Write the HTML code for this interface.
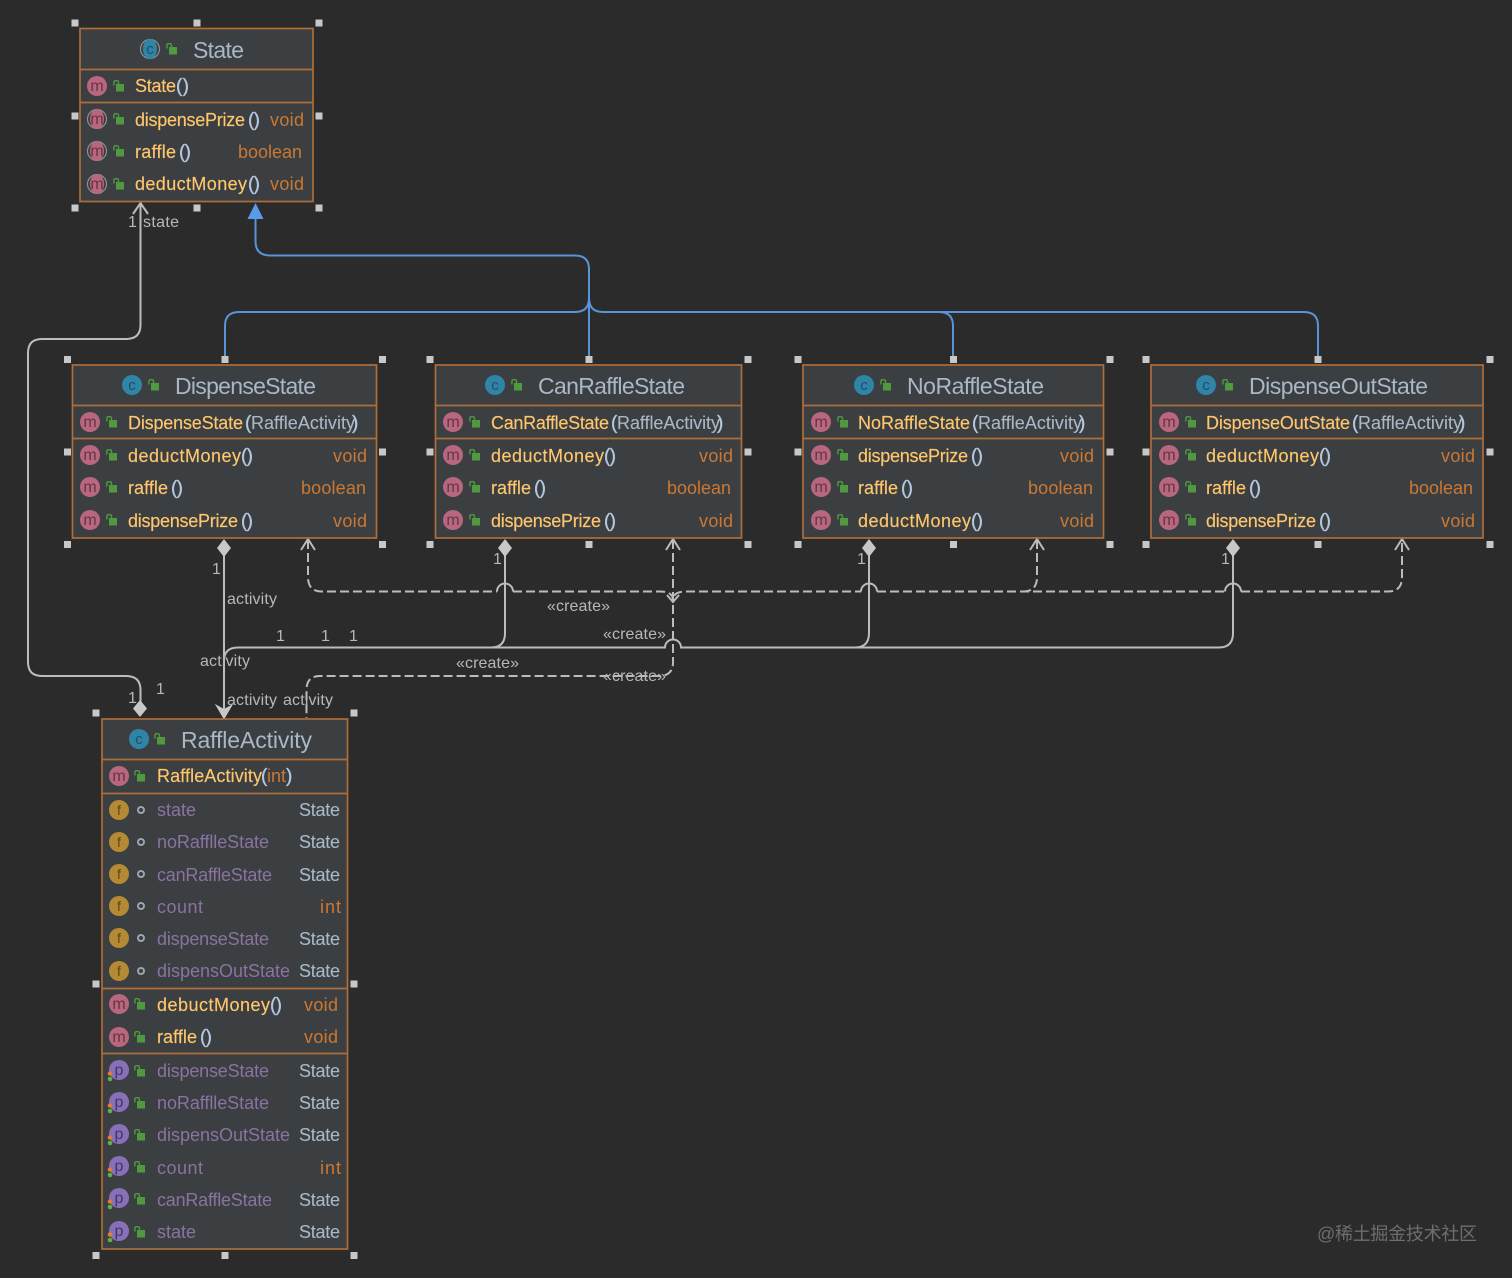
<!DOCTYPE html>
<html><head><meta charset="utf-8"><style>
html,body{margin:0;padding:0;background:#2b2b2b;width:1512px;height:1278px;overflow:hidden}
svg{display:block;font-family:"Liberation Sans","Noto Sans CJK SC",sans-serif;filter:blur(.3px)}
.b{fill:#3c3f41;stroke:#ad6e3b;stroke-width:1.7}
.d{stroke:#ad6e3b;stroke-width:1.7;fill:none}
.t{font-size:23px;fill:#a9b7c6}
.n{font-size:18px;fill:#ffc66d;stroke:#ffc66d;stroke-width:.15}
.p{font-size:18px;fill:#a9b7c6;stroke:#a9b7c6;stroke-width:.1}
.o{font-size:19px;fill:#b4c8e0;stroke:#b4c8e0;stroke-width:.35}
.y{font-size:18px;fill:#cc7832}
.f{font-size:18px;fill:#8b72a0}
.l{font-size:16px;fill:#b4b8bc}
.ci{font-size:16px;fill:#643644;text-anchor:middle}
.cc{font-size:15px;fill:#1f4f66;text-anchor:middle}
.cf{font-size:14px;fill:#5c4420;text-anchor:middle}
.cp{font-size:16px;fill:#3f3560;text-anchor:middle}
.mi{fill:#b9667f}.ci2{fill:#2f84a8}.fi{fill:#b58a35}.pi{fill:#8670b8}
.h{fill:#c8c8c8}
.bl{fill:none;stroke:#5a94d8;stroke-width:2}
.g{fill:none;stroke:#bcbcbc;stroke-width:2}
.ds{fill:none;stroke:#bcbcbc;stroke-width:2;stroke-dasharray:9 4}
.od{fill:#e07b3a}.gd{fill:#5fb04a}
</style></head><body>
<svg width="1512" height="1278" viewBox="0 0 1512 1278" xmlns="http://www.w3.org/2000/svg">
<defs>
<g id="k"><rect x="3" y="4" width="8" height="7.500" fill="#4f9a3f"/><path d="M.9 5.500V2.200A1.600 1.600 0 0 1 2.500 .7H4A1.600 1.600 0 0 1 5.500 2.200V4" fill="none" stroke="#4f9a3f" stroke-width="1.400"/></g>
<g id="q"><circle cx="0" cy="0" r="3" fill="none" stroke="#a0a4a8" stroke-width="2"/></g>
</defs>
<rect width="1512" height="1278" fill="#2b2b2b"/>

<!-- connectors -->
<path class="bl" d="M255.500 218V241Q255.500 255.500 270 255.500H575Q589 255.500 589 269V358"/>
<path class="bl" d="M225 358V326Q225 312 239 312H575Q589 312 589 298Q589 312 603 312H939Q953 312 953 326V358"/>
<path class="bl" d="M939 312H1304Q1318 312 1318 326V358"/>
<path d="M255.500 203L263.500 219H247.500Z" fill="#5a9be8"/>

<path class="g" d="M140.500 203V325Q140.500 339 126 339H42Q28 339 28 353V662Q28 676 42 676H126Q140.500 676 140.500 690V703"/>
<path class="g" d="M133 214L140.500 203L148 214"/>
<path class="g" d="M224 555V714"/>
<path class="g" d="M224 661Q224 647.500 238 647.500H665A8 8 0 0 1 681 647.500H1219Q1233 647.500 1233 633V555"/>
<path class="g" d="M491 647.500Q505 647.500 505 633V555M855 647.500Q869 647.500 869 633V555"/>
<path d="M224 539L231 548L224 557L217 548Z" class="h"/>
<path d="M505 539L512 548L505 557L498 548Z" class="h"/>
<path d="M869 539L876 548L869 557L862 548Z" class="h"/>
<path d="M1233 539L1240 548L1233 557L1226 548Z" class="h"/>
<path d="M140 700L147 708.500L140 717L133 708.500Z" class="h"/>
<path d="M224 718L217 706L224 710L231 706Z" fill="#c8c8c8" stroke="#c8c8c8" stroke-width="1.600"/>

<path class="ds" d="M308 540V577Q308 591.500 322 591.500H497M513 591.500H660Q673 591.500 673 600Q673 591.500 686 591.500H861M877 591.500H1225M1241 591.500H1388Q1402 591.500 1402 577V540"/>
<path class="g" d="M497 591.500A8 8 0 0 1 513 591.500M861 591.500A8 8 0 0 1 877 591.500M1225 591.500A8 8 0 0 1 1241 591.500"/>
<path class="ds" d="M1037 540V577Q1037 591.500 1023 591.500"/>
<path class="ds" d="M673 540V662Q673 676 659 676H320Q306.500 676 306.500 690V718"/>
<path class="g" d="M301 550L308 539L315 550M666 550L673 539L680 550M1030 550L1037 539L1044 550M1395 550L1402 539L1409 550M667 595L673 602L679 595"/>

<!-- labels -->
<text class="l" x="128" y="227">1</text><text class="l" x="143" y="227" textLength="36">state</text>
<text class="l" x="212" y="574">1</text><text class="l" x="227" y="604" textLength="50">activity</text>
<text class="l" x="276" y="641">1</text><text class="l" x="321" y="641">1</text><text class="l" x="349" y="641">1</text>
<text class="l" x="200" y="666" textLength="50">activity</text>
<text class="l" x="128" y="703">1</text><text class="l" x="156" y="694">1</text>
<text class="l" x="227" y="705" textLength="50">activity</text><text class="l" x="283" y="705" textLength="50">activity</text>
<text class="l" x="493" y="564">1</text><text class="l" x="857" y="564">1</text><text class="l" x="1221" y="564">1</text>
<text class="l" x="547" y="611" textLength="63">«create»</text>
<text class="l" x="603" y="639" textLength="63">«create»</text>
<text class="l" x="456" y="668" textLength="63">«create»</text>
<text class="l" x="603" y="681" textLength="63">«create»</text>

<!-- State -->
<rect class="b" x="80" y="28.500" width="233" height="173"/>
<path class="d" d="M80 69.500H313M80 102.500H313"/>
<circle cx="150" cy="49" r="9.500" fill="none" stroke="#8a9094" stroke-width="1.200"/><ellipse class="ci2" cx="150" cy="49" rx="7" ry="10"/>
<text class="cc" x="150" y="54">c</text><use href="#k" x="166" y="43"/>
<text class="t" x="193" y="58" textLength="51">State</text>
<circle class="mi" cx="97" cy="86" r="10"/><text class="ci" x="97" y="91">m</text><use href="#k" x="113" y="80"/>
<text class="n" x="135" y="92" textLength="41">State</text><text class="o" x="176" y="92" textLength="13">()</text>
<circle cx="97" cy="119" r="9.500" fill="none" stroke="#8a9094" stroke-width="1.200"/><ellipse class="mi" cx="97" cy="119" rx="7" ry="10"/><text class="ci" x="97" y="124">m</text><use href="#k" x="113" y="113"/>
<text class="n" x="135" y="126" textLength="110">dispensePrize</text><text class="o" x="248" y="126" textLength="12">()</text><text class="y" x="270" y="126" textLength="34">void</text>
<circle cx="97" cy="151" r="9.500" fill="none" stroke="#8a9094" stroke-width="1.200"/><ellipse class="mi" cx="97" cy="151" rx="7" ry="10"/><text class="ci" x="97" y="156">m</text><use href="#k" x="113" y="145"/>
<text class="n" x="135" y="158" textLength="41">raffle</text><text class="o" x="179" y="158" textLength="12">()</text><text class="y" x="238" y="158" textLength="64">boolean</text>
<circle cx="97" cy="184" r="9.500" fill="none" stroke="#8a9094" stroke-width="1.200"/><ellipse class="mi" cx="97" cy="184" rx="7" ry="10"/><text class="ci" x="97" y="189">m</text><use href="#k" x="113" y="178"/>
<text class="n" x="135" y="190" textLength="112">deductMoney</text><text class="o" x="248" y="190" textLength="12">()</text><text class="y" x="270" y="190" textLength="34">void</text>

<!-- DispenseState -->
<rect class="b" x="72.500" y="365" width="304" height="173"/>
<path class="d" d="M72.500 405.500H376.500M72.500 438.500H376.500"/>
<circle class="ci2" cx="132" cy="385" r="10"/><text class="cc" x="132" y="390">c</text><use href="#k" x="148" y="379"/>
<text class="t" x="175" y="394" textLength="141">DispenseState</text>
<circle class="mi" cx="90" cy="422" r="10"/><text class="ci" x="90" y="427">m</text><use href="#k" x="106" y="416"/>
<text class="n" x="128" y="429" textLength="115">DispenseState</text><text class="o" x="245" y="429">(</text><text class="p" x="251" y="429" textLength="104">RaffleActivity</text><text class="o" x="352" y="429">)</text>
<circle class="mi" cx="90" cy="455" r="10"/><text class="ci" x="90" y="460">m</text><use href="#k" x="106" y="449"/>
<text class="n" x="128" y="462" textLength="113">deductMoney</text><text class="o" x="241" y="462" textLength="12">()</text><text class="y" x="333" y="462" textLength="34">void</text>
<circle class="mi" cx="90" cy="487" r="10"/><text class="ci" x="90" y="492">m</text><use href="#k" x="106" y="481"/>
<text class="n" x="128" y="494" textLength="40">raffle</text><text class="o" x="171" y="494" textLength="12">()</text><text class="y" x="301" y="494" textLength="65">boolean</text>
<circle class="mi" cx="90" cy="520" r="10"/><text class="ci" x="90" y="525">m</text><use href="#k" x="106" y="514"/>
<text class="n" x="128" y="527" textLength="110">dispensePrize</text><text class="o" x="241" y="527" textLength="12">()</text><text class="y" x="333" y="527" textLength="34">void</text>

<!-- CanRaffleState -->
<rect class="b" x="435.500" y="365" width="306" height="173"/>
<path class="d" d="M435.500 405.500H741.500M435.500 438.500H741.500"/>
<circle class="ci2" cx="495" cy="385" r="10"/><text class="cc" x="495" y="390">c</text><use href="#k" x="511" y="379"/>
<text class="t" x="538" y="394" textLength="147">CanRaffleState</text>
<circle class="mi" cx="453" cy="422" r="10"/><text class="ci" x="453" y="427">m</text><use href="#k" x="469" y="416"/>
<text class="n" x="491" y="429" textLength="118">CanRaffleState</text><text class="o" x="611" y="429">(</text><text class="p" x="617" y="429" textLength="103">RaffleActivity</text><text class="o" x="717" y="429">)</text>
<circle class="mi" cx="453" cy="455" r="10"/><text class="ci" x="453" y="460">m</text><use href="#k" x="469" y="449"/>
<text class="n" x="491" y="462" textLength="113">deductMoney</text><text class="o" x="604" y="462" textLength="12">()</text><text class="y" x="699" y="462" textLength="34">void</text>
<circle class="mi" cx="453" cy="487" r="10"/><text class="ci" x="453" y="492">m</text><use href="#k" x="469" y="481"/>
<text class="n" x="491" y="494" textLength="40">raffle</text><text class="o" x="534" y="494" textLength="12">()</text><text class="y" x="667" y="494" textLength="64">boolean</text>
<circle class="mi" cx="453" cy="520" r="10"/><text class="ci" x="453" y="525">m</text><use href="#k" x="469" y="514"/>
<text class="n" x="491" y="527" textLength="110">dispensePrize</text><text class="o" x="604" y="527" textLength="12">()</text><text class="y" x="699" y="527" textLength="34">void</text>

<!-- NoRaffleState -->
<rect class="b" x="803" y="365" width="300.500" height="173"/>
<path class="d" d="M803 405.500H1103.500M803 438.500H1103.500"/>
<circle class="ci2" cx="864" cy="385" r="10"/><text class="cc" x="864" y="390">c</text><use href="#k" x="880" y="379"/>
<text class="t" x="907" y="394" textLength="137">NoRaffleState</text>
<circle class="mi" cx="821" cy="422" r="10"/><text class="ci" x="821" y="427">m</text><use href="#k" x="837" y="416"/>
<text class="n" x="858" y="429" textLength="112">NoRaffleState</text><text class="o" x="972" y="429">(</text><text class="p" x="978" y="429" textLength="104">RaffleActivity</text><text class="o" x="1079" y="429">)</text>
<circle class="mi" cx="821" cy="455" r="10"/><text class="ci" x="821" y="460">m</text><use href="#k" x="837" y="449"/>
<text class="n" x="858" y="462" textLength="110">dispensePrize</text><text class="o" x="971" y="462" textLength="12">()</text><text class="y" x="1060" y="462" textLength="34">void</text>
<circle class="mi" cx="821" cy="487" r="10"/><text class="ci" x="821" y="492">m</text><use href="#k" x="837" y="481"/>
<text class="n" x="858" y="494" textLength="40">raffle</text><text class="o" x="901" y="494" textLength="12">()</text><text class="y" x="1028" y="494" textLength="65">boolean</text>
<circle class="mi" cx="821" cy="520" r="10"/><text class="ci" x="821" y="525">m</text><use href="#k" x="837" y="514"/>
<text class="n" x="858" y="527" textLength="113">deductMoney</text><text class="o" x="971" y="527" textLength="12">()</text><text class="y" x="1060" y="527" textLength="34">void</text>

<!-- DispenseOutState -->
<rect class="b" x="1151" y="365" width="332" height="173"/>
<path class="d" d="M1151 405.500H1483M1151 438.500H1483"/>
<circle class="ci2" cx="1206" cy="385" r="10"/><text class="cc" x="1206" y="390">c</text><use href="#k" x="1222" y="379"/>
<text class="t" x="1249" y="394" textLength="179">DispenseOutState</text>
<circle class="mi" cx="1169" cy="422" r="10"/><text class="ci" x="1169" y="427">m</text><use href="#k" x="1185" y="416"/>
<text class="n" x="1206" y="429" textLength="144">DispenseOutState</text><text class="o" x="1352" y="429">(</text><text class="p" x="1358" y="429" textLength="104">RaffleActivity</text><text class="o" x="1459" y="429">)</text>
<circle class="mi" cx="1169" cy="455" r="10"/><text class="ci" x="1169" y="460">m</text><use href="#k" x="1185" y="449"/>
<text class="n" x="1206" y="462" textLength="113">deductMoney</text><text class="o" x="1319" y="462" textLength="12">()</text><text class="y" x="1441" y="462" textLength="34">void</text>
<circle class="mi" cx="1169" cy="487" r="10"/><text class="ci" x="1169" y="492">m</text><use href="#k" x="1185" y="481"/>
<text class="n" x="1206" y="494" textLength="40">raffle</text><text class="o" x="1249" y="494" textLength="12">()</text><text class="y" x="1409" y="494" textLength="64">boolean</text>
<circle class="mi" cx="1169" cy="520" r="10"/><text class="ci" x="1169" y="525">m</text><use href="#k" x="1185" y="514"/>
<text class="n" x="1206" y="527" textLength="110">dispensePrize</text><text class="o" x="1319" y="527" textLength="12">()</text><text class="y" x="1441" y="527" textLength="34">void</text>

<!-- RaffleActivity -->
<rect class="b" x="102" y="719" width="245.500" height="530"/>
<path class="d" d="M102 759.500H347.500M102 793.500H347.500M102 988.500H347.500M102 1053.500H347.500"/>
<circle class="ci2" cx="139" cy="739" r="10"/><text class="cc" x="139" y="744">c</text><use href="#k" x="154" y="733"/>
<text class="t" x="181" y="748" textLength="131">RaffleActivity</text>
<circle class="mi" cx="119" cy="776" r="10"/><text class="ci" x="119" y="781">m</text><use href="#k" x="134" y="770"/>
<text class="n" x="157" y="782" textLength="105">RaffleActivity</text><text class="o" x="261" y="782">(</text><text class="y" x="267" y="782" textLength="19">int</text><text class="o" x="286" y="782">)</text>

<circle class="fi" cx="119" cy="810" r="10"/><text class="cf" x="119" y="815">f</text><use href="#q" x="141" y="810"/><text class="f" x="157" y="816" textLength="39">state</text><text class="p" x="299" y="816" textLength="41">State</text>
<circle class="fi" cx="119" cy="842" r="10"/><text class="cf" x="119" y="847">f</text><use href="#q" x="141" y="842"/><text class="f" x="157" y="848" textLength="112">noRafflleState</text><text class="p" x="299" y="848" textLength="41">State</text>
<circle class="fi" cx="119" cy="874" r="10"/><text class="cf" x="119" y="879">f</text><use href="#q" x="141" y="874"/><text class="f" x="157" y="881" textLength="115">canRaffleState</text><text class="p" x="299" y="881" textLength="41">State</text>
<circle class="fi" cx="119" cy="906" r="10"/><text class="cf" x="119" y="911">f</text><use href="#q" x="141" y="906"/><text class="f" x="157" y="913" textLength="46">count</text><text class="y" x="320" y="913" textLength="21">int</text>
<circle class="fi" cx="119" cy="938" r="10"/><text class="cf" x="119" y="943">f</text><use href="#q" x="141" y="938"/><text class="f" x="157" y="945" textLength="112">dispenseState</text><text class="p" x="299" y="945" textLength="41">State</text>
<circle class="fi" cx="119" cy="971" r="10"/><text class="cf" x="119" y="976">f</text><use href="#q" x="141" y="971"/><text class="f" x="157" y="977" textLength="133">dispensOutState</text><text class="p" x="299" y="977" textLength="41">State</text>

<circle class="mi" cx="119" cy="1004" r="10"/><text class="ci" x="119" y="1009">m</text><use href="#k" x="134" y="998"/>
<text class="n" x="157" y="1011" textLength="113">debuctMoney</text><text class="o" x="270" y="1011" textLength="12">()</text><text class="y" x="304" y="1011" textLength="34">void</text>
<circle class="mi" cx="119" cy="1037" r="10"/><text class="ci" x="119" y="1042">m</text><use href="#k" x="134" y="1031"/>
<text class="n" x="157" y="1043" textLength="40">raffle</text><text class="o" x="200" y="1043" textLength="12">()</text><text class="y" x="304" y="1043" textLength="34">void</text>

<circle class="pi" cx="119" cy="1070" r="10"/><text class="cp" x="119" y="1075">p</text><circle class="od" cx="110" cy="1073.500" r="2.300"/><circle class="gd" cx="110" cy="1079" r="2.300"/><use href="#k" x="134" y="1065"/>
<text class="f" x="157" y="1077" textLength="112">dispenseState</text><text class="p" x="299" y="1077" textLength="41">State</text>
<circle class="pi" cx="119" cy="1102" r="10"/><text class="cp" x="119" y="1107">p</text><circle class="od" cx="110" cy="1105.500" r="2.300"/><circle class="gd" cx="110" cy="1111" r="2.300"/><use href="#k" x="134" y="1097"/>
<text class="f" x="157" y="1109" textLength="112">noRafflleState</text><text class="p" x="299" y="1109" textLength="41">State</text>
<circle class="pi" cx="119" cy="1134" r="10"/><text class="cp" x="119" y="1139">p</text><circle class="od" cx="110" cy="1137.500" r="2.300"/><circle class="gd" cx="110" cy="1143" r="2.300"/><use href="#k" x="134" y="1129"/>
<text class="f" x="157" y="1141" textLength="133">dispensOutState</text><text class="p" x="299" y="1141" textLength="41">State</text>
<circle class="pi" cx="119" cy="1166" r="10"/><text class="cp" x="119" y="1171">p</text><circle class="od" cx="110" cy="1169.500" r="2.300"/><circle class="gd" cx="110" cy="1175" r="2.300"/><use href="#k" x="134" y="1161"/>
<text class="f" x="157" y="1174" textLength="46">count</text><text class="y" x="320" y="1174" textLength="21">int</text>
<circle class="pi" cx="119" cy="1198" r="10"/><text class="cp" x="119" y="1203">p</text><circle class="od" cx="110" cy="1201.500" r="2.300"/><circle class="gd" cx="110" cy="1207" r="2.300"/><use href="#k" x="134" y="1193"/>
<text class="f" x="157" y="1206" textLength="115">canRaffleState</text><text class="p" x="299" y="1206" textLength="41">State</text>
<circle class="pi" cx="119" cy="1231" r="10"/><text class="cp" x="119" y="1236">p</text><circle class="od" cx="110" cy="1234.500" r="2.300"/><circle class="gd" cx="110" cy="1240" r="2.300"/><use href="#k" x="134" y="1226"/>
<text class="f" x="157" y="1238" textLength="39">state</text><text class="p" x="299" y="1238" textLength="41">State</text>

<!-- handles -->
<g class="h">
<rect x="71.500" y="19.500" width="7" height="7"/><rect x="193.500" y="19.500" width="7" height="7"/><rect x="315.500" y="19.500" width="7" height="7"/>
<rect x="71.500" y="112.500" width="7" height="7"/><rect x="315.500" y="112.500" width="7" height="7"/>
<rect x="71.500" y="204.500" width="7" height="7"/><rect x="193.500" y="204.500" width="7" height="7"/><rect x="315.500" y="204.500" width="7" height="7"/>

<rect x="64" y="356" width="7" height="7"/><rect x="221.500" y="356" width="7" height="7"/><rect x="379" y="356" width="7" height="7"/>
<rect x="64" y="448.500" width="7" height="7"/><rect x="379" y="448.500" width="7" height="7"/>
<rect x="64" y="541" width="7" height="7"/><rect x="379" y="541" width="7" height="7"/>

<rect x="426.500" y="356" width="7" height="7"/><rect x="585.500" y="356" width="7" height="7"/><rect x="744.500" y="356" width="7" height="7"/>
<rect x="426.500" y="448.500" width="7" height="7"/><rect x="744.500" y="448.500" width="7" height="7"/>
<rect x="426.500" y="541" width="7" height="7"/><rect x="585.500" y="541" width="7" height="7"/><rect x="744.500" y="541" width="7" height="7"/>

<rect x="794.500" y="356" width="7" height="7"/><rect x="950" y="356" width="7" height="7"/><rect x="1106.500" y="356" width="7" height="7"/>
<rect x="794.500" y="448.500" width="7" height="7"/><rect x="1106.500" y="448.500" width="7" height="7"/>
<rect x="794.500" y="541" width="7" height="7"/><rect x="950" y="541" width="7" height="7"/><rect x="1106.500" y="541" width="7" height="7"/>

<rect x="1142.500" y="356" width="7" height="7"/><rect x="1314.500" y="356" width="7" height="7"/><rect x="1486.500" y="356" width="7" height="7"/>
<rect x="1142.500" y="448.500" width="7" height="7"/><rect x="1486.500" y="448.500" width="7" height="7"/>
<rect x="1142.500" y="541" width="7" height="7"/><rect x="1314.500" y="541" width="7" height="7"/><rect x="1486.500" y="541" width="7" height="7"/>

<rect x="92.500" y="709.500" width="7" height="7"/><rect x="350.500" y="709.500" width="7" height="7"/>
<rect x="92.500" y="980.500" width="7" height="7"/><rect x="350.500" y="980.500" width="7" height="7"/>
<rect x="92.500" y="1252" width="7" height="7"/><rect x="221.500" y="1252" width="7" height="7"/><rect x="350.500" y="1252" width="7" height="7"/>
</g>

<text x="1317" y="1240" font-size="18" fill="#6e6e6e" textLength="160">@稀土掘金技术社区</text>
</svg>
</body></html>
